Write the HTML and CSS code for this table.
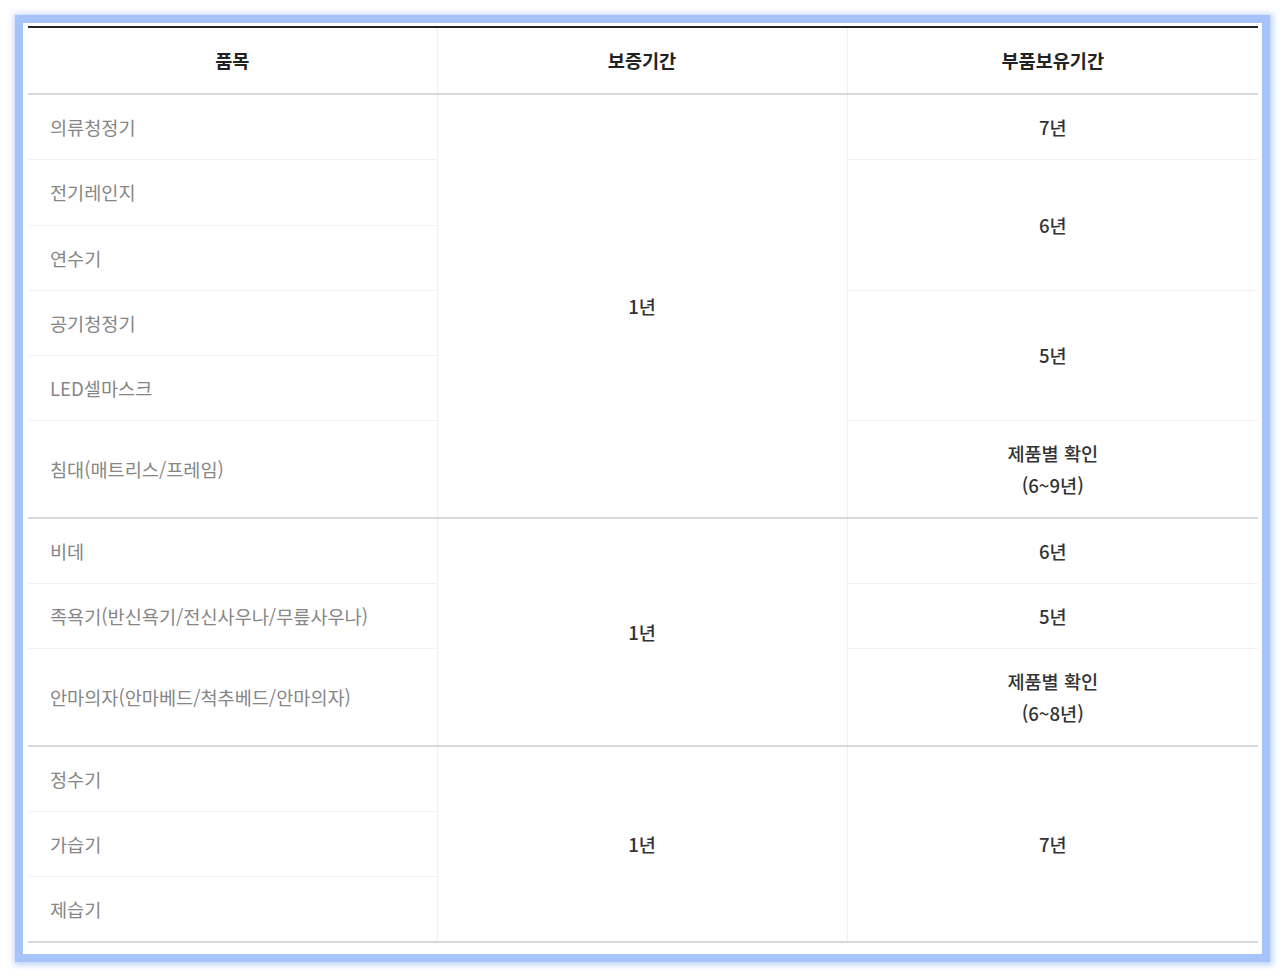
FILE: index.html
```html
<!DOCTYPE html>
<html lang="ko">
<head>
<meta charset="utf-8">
<link rel="stylesheet" href="styles.css">
</head>
<body>
<div class="frame">
  <table class="warranty">
    <colgroup><col class="c1"><col class="c2"><col class="c3"></colgroup>
    <thead>
      <tr><th>품목</th><th>보증기간</th><th>부품보유기간</th></tr>
    </thead>
    <tbody>
      <tr><td class="item">의류청정기</td><td class="val" rowspan="6">1년</td><td class="val">7년</td></tr>
      <tr><td class="item">전기레인지</td><td class="val" rowspan="2">6년</td></tr>
      <tr><td class="item">연수기</td></tr>
      <tr><td class="item">공기청정기</td><td class="val" rowspan="2">5년</td></tr>
      <tr><td class="item">LED셀마스크</td></tr>
      <tr class="last"><td class="item">침대(매트리스/프레임)</td><td class="val">제품별 확인<br>(6~9년)</td></tr>
    </tbody>
    <tbody>
      <tr><td class="item">비데</td><td class="val" rowspan="3">1년</td><td class="val">6년</td></tr>
      <tr><td class="item">족욕기(반신욕기/전신사우나/무릎사우나)</td><td class="val">5년</td></tr>
      <tr class="last"><td class="item">안마의자(안마베드/척추베드/안마의자)</td><td class="val">제품별 확인<br>(6~8년)</td></tr>
    </tbody>
    <tbody>
      <tr><td class="item">정수기</td><td class="val" rowspan="3">1년</td><td class="val" rowspan="3">7년</td></tr>
      <tr><td class="item">가습기</td></tr>
      <tr class="last"><td class="item">제습기</td></tr>
    </tbody>
  </table>
</div>
</body>
</html>
```

FILE: styles.css
```css
html, body {
  margin: 0;
  padding: 0;
  background: #ffffff;
}
body {
  padding: 15px;
  font-family: "Noto Sans CJK KR", "Noto Sans", sans-serif;
}
.frame {
  width: 1239px;
  height: 931px;
  box-sizing: content-box;
  background: #ffffff;
  border: 8px solid #a6c4fa;
  box-shadow: 1px 1px 6px 2px rgba(166, 196, 250, 0.75);
  padding: 0;
  overflow: hidden;
}
.warranty {
  margin: 3px 0 0 5px;
  width: 1230px;
  border-collapse: collapse;
  table-layout: fixed;
  border-top: 2px solid #1f2428;
}
.c1 { width: 409px; }
.c2 { width: 410px; }
.c3 { width: 411px; }
th {
  height: 67px;
  box-sizing: border-box;
  padding: 0 0 1px;
  font-size: 18.6px;
  font-weight: 700;
  color: #222222;
  text-align: center;
  border-bottom: 2px solid #d6dadd;
  border-left: 1px solid #f0f0f0;
  line-height: 31.5px;
}
th:first-child { border-left: 0; }
td {
  padding: 16px 0 16.5px;
  font-size: 18.6px;
  line-height: 31.5px;
  border-bottom: 1px solid #f2f2f2;
  border-left: 1px solid #f0f0f0;
  vertical-align: middle;
}
tbody tr:nth-child(even) td { padding-bottom: 17px; }
tbody tr.last td { padding-bottom: 16.5px; }
td.item {
  padding-left: 22px;
  color: #868686;
  border-left: 0;
}
td.val {
  text-align: center;
  color: #333333;
  font-weight: 500;
}
tbody tr.last td,
tbody td[rowspan] {
  border-bottom: 2px solid #d6dadd;
}
tbody tr td.val[rowspan="2"] { border-bottom: 1px solid #f2f2f2; }
```
